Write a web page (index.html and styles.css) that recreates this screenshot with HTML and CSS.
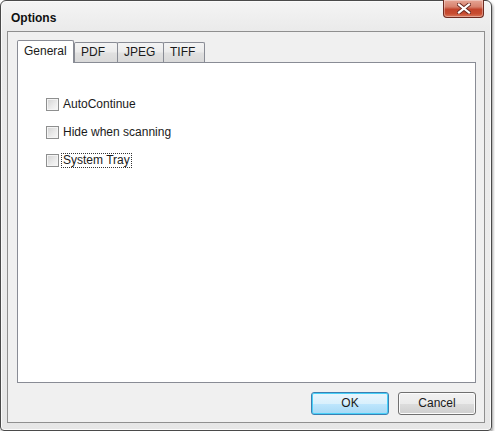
FILE: index.html
```html
<!DOCTYPE html>
<html>
<head>
<meta charset="utf-8">
<link rel="stylesheet" href="styles.css">
</head>
<body>
<div class="window">
  <div class="titlebar">
    <span class="title">Options</span>
    <div class="close">
      <svg width="14" height="11" viewBox="0 0 14 11">
        <path d="M2 1.5 L12 9.5 M12 1.5 L2 9.5" stroke="#6a2a22" stroke-width="4" stroke-linecap="square"/>
        <path d="M2 1.5 L12 9.5 M12 1.5 L2 9.5" stroke="#ffffff" stroke-width="2.2" stroke-linecap="square"/>
      </svg>
    </div>
  </div>
  <div class="client">
    <div class="tabs">
      <div class="tab selected">General</div>
      <div class="tab">PDF</div>
      <div class="tab">JPEG</div>
      <div class="tab">TIFF</div>
    </div>
    <div class="panel">
      <div class="check"><span class="box"></span><span class="label">AutoContinue</span></div>
      <div class="check"><span class="box"></span><span class="label">Hide when scanning</span></div>
      <div class="check"><span class="box"></span><span class="label focus">System Tray</span></div>
    </div>
    <div class="buttons">
      <div class="btn default">OK</div>
      <div class="btn">Cancel</div>
    </div>
  </div>
</div>
</body>
</html>
```
FILE: styles.css
```css
html, body {
  margin: 0;
  padding: 0;
  background: #ffffff;
}
body {
  font-family: "Liberation Sans", Arial, sans-serif;
  font-size: 12px;
  color: #1a1a1a;
}
.window {
  width: 490px;
  height: 429px;
  border: 1px solid #4a4a4a;
  border-radius: 6px 6px 4px 4px;
  background: linear-gradient(180deg, #f4f4f4 0%, #e9e9e9 8%, #ececec 60%, #e6e6e6 100%);
  box-shadow: 1px 2px 3px rgba(0,0,0,0.4), inset 0 0 0 1px #fafafa;
  display: flex;
  flex-direction: column;
}
.titlebar {
  height: 30px;
  display: flex;
  align-items: flex-start;
  padding-left: 10px;
}
.title {
  font-weight: bold;
  font-size: 12px;
  margin-top: 10px;
  color: #111;
}
.close {
  margin-left: auto;
  margin-right: 7px;
  margin-top: -1px;
  width: 39px;
  height: 17px;
  border: 1px solid #6e2a20;
  border-top: none;
  border-radius: 0 0 4px 4px;
  background: linear-gradient(180deg, #e6a595 0%, #d7826e 40%, #c2442c 55%, #c84c30 80%, #d9785c 100%);
  display: flex;
  align-items: center;
  justify-content: center;
  box-shadow: inset 0 0 0 1px rgba(255,255,255,0.35);
}
.client {
  margin: 0 6px 7px 6px;
  flex: 1;
  border: 1px solid #8f8f8f;
  background: #f0f0f0;
  padding: 8px 8px 7px 9px;
  display: flex;
  flex-direction: column;
}
.tabs {
  display: flex;
  align-items: flex-end;
  height: 22px;
  position: relative;
  z-index: 1;
}
.tab {
  height: 19px;
  border: 1px solid #898c95;
  border-bottom: none;
  border-radius: 2px 2px 0 0;
  background: linear-gradient(180deg, #f4f4f4 0%, #ececec 45%, #e0e0e0 55%, #d9d9d9 100%);
  padding: 0 6px;
  line-height: 19px;
  margin-left: -1px;
}
.tab:nth-child(2) { width: 30px; margin-left: 0; }
.tab:nth-child(3) { width: 33px; }
.tab:nth-child(4) { width: 28px; }
.tab.selected {
  height: 22px;
  width: 43px;
  margin-left: 0;
  background: #ffffff;
  line-height: 20px;
  margin-bottom: -1px;
  padding: 0 6px;
}
.panel {
  border: 1px solid #898c95;
  background: #ffffff;
  padding: 35px 0 0 28px;
  box-sizing: border-box;
  height: 321px;
}
.check {
  display: flex;
  align-items: center;
  height: 13px;
  margin-bottom: 15px;
}
.box {
  width: 11px;
  height: 11px;
  border: 1px solid #8e8f8f;
  background: linear-gradient(135deg, #d2d2d2 0%, #ececec 60%, #f8f8f8 100%);
  box-shadow: inset 0 0 0 1px #f4f4f4;
  margin-right: 3px;
  flex: none;
}
.label {
  padding: 0 1px;
  line-height: 13px;
}
.label.focus {
  outline: 1px dotted #333;
}
.buttons {
  margin-top: 9px;
  display: flex;
  justify-content: flex-end;
  gap: 9px;
}
.btn {
  width: 76px;
  height: 21px;
  border: 1px solid #707070;
  border-radius: 3px;
  background: linear-gradient(180deg, #f2f2f2 0%, #ebebeb 50%, #dddddd 51%, #cfcfcf 100%);
  box-shadow: inset 0 0 0 1px #fcfcfc;
  text-align: center;
  line-height: 21px;
}
.btn.default {
  border-color: #3c7fb1;
  background: linear-gradient(180deg, #eaf6fd 0%, #d9f0fc 50%, #bee6fd 51%, #a7d9f5 100%);
  box-shadow: inset 0 0 0 1px #48d0f8;
}
```
